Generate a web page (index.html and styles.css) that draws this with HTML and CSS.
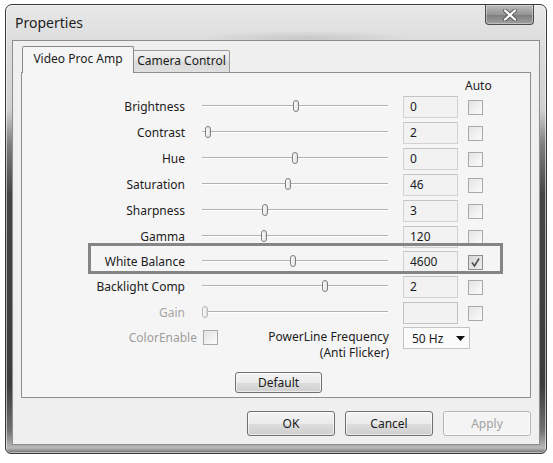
FILE: index.html
```html
<!DOCTYPE html>
<html>
<head>
<meta charset="utf-8">
<title>Properties</title>
<link rel="stylesheet" href="styles.css">
</head>
<body>
<div class="window">
  <div class="titlebar">
    <span class="title">Properties</span>
    <div class="close">
      <svg width="14" height="12" viewBox="0 0 14 12">
        <path d="M2 1.5 L12 10.5 M12 1.5 L2 10.5" stroke="#5a5a5a" stroke-width="4" stroke-linecap="round"/>
        <path d="M2 1.5 L12 10.5 M12 1.5 L2 10.5" stroke="#ffffff" stroke-width="2.2" stroke-linecap="round"/>
      </svg>
    </div>
  </div>
  <div class="client">
    <div class="tabs">
      <div class="tab active">Video Proc Amp</div>
      <div class="tab">Camera Control</div>
    </div>
    <div class="panel">
      <div class="auto-head"><span>Auto</span></div>

      <div class="row">
        <span class="label">Brightness</span>
        <div class="slider"><span class="track"></span><span class="thumb" style="left:91px"></span></div>
        <div class="value">0</div>
        <span class="check"></span>
      </div>
      <div class="row">
        <span class="label">Contrast</span>
        <div class="slider"><span class="track"></span><span class="thumb" style="left:3px"></span></div>
        <div class="value">2</div>
        <span class="check"></span>
      </div>
      <div class="row">
        <span class="label">Hue</span>
        <div class="slider"><span class="track"></span><span class="thumb" style="left:90px"></span></div>
        <div class="value">0</div>
        <span class="check"></span>
      </div>
      <div class="row">
        <span class="label">Saturation</span>
        <div class="slider"><span class="track"></span><span class="thumb" style="left:83px"></span></div>
        <div class="value">46</div>
        <span class="check"></span>
      </div>
      <div class="row">
        <span class="label">Sharpness</span>
        <div class="slider"><span class="track"></span><span class="thumb" style="left:60px"></span></div>
        <div class="value">3</div>
        <span class="check"></span>
      </div>
      <div class="row">
        <span class="label">Gamma</span>
        <div class="slider"><span class="track"></span><span class="thumb" style="left:59px"></span></div>
        <div class="value">120</div>
        <span class="check"></span>
      </div>
      <div class="row wb">
        <span class="label">White Balance</span>
        <div class="slider"><span class="track"></span><span class="thumb" style="left:88px"></span></div>
        <div class="value">4600</div>
        <span class="check checked">
          <svg width="13" height="13" viewBox="0 0 13 13"><path d="M3 6.5 L5.5 10 L10 2.5" fill="none" stroke="#555" stroke-width="1.7"/></svg>
        </span>
        <div class="highlight"></div>
      </div>
      <div class="row">
        <span class="label">Backlight Comp</span>
        <div class="slider"><span class="track"></span><span class="thumb" style="left:120px"></span></div>
        <div class="value">2</div>
        <span class="check"></span>
      </div>
      <div class="row disabled">
        <span class="label">Gain</span>
        <div class="slider"><span class="track"></span><span class="thumb" style="left:0px"></span></div>
        <div class="value"></div>
        <span class="check"></span>
      </div>

      <div class="extra">
        <span class="ce-label">ColorEnable</span>
        <span class="check ce-check"></span>
        <span class="plf">PowerLine Frequency<br>(Anti Flicker)</span>
        <div class="dropdown">
          <span>50 Hz</span>
          <svg width="9" height="5" viewBox="0 0 9 5"><path d="M0 0 H9 L4.5 5 Z" fill="#111"/></svg>
        </div>
      </div>
      <div class="default-wrap"><div class="btn default">Default</div></div>
    </div>
    <div class="actions">
      <div class="btn">OK</div>
      <div class="btn">Cancel</div>
      <div class="btn disabled-btn">Apply</div>
    </div>
  </div>
</div>
</body>
</html>
```
FILE: styles.css
```css
* { box-sizing: border-box; }

body {
  margin: 0;
  background: #ffffff;
  font-family: "Noto Sans", "Open Sans", sans-serif;
  font-size: 12px;
  color: #1c1c1c;
}

.window {
  width: 542px;
  height: 450px;
  margin: 4px 0 0 5px;
  border: 1px solid #3a3a3a;
  border-radius: 7px 7px 6px 6px;
  padding: 0 6px 8px;
  display: flex;
  flex-direction: column;
  background:
    radial-gradient(ellipse 110px 7px at 300px 33px, rgba(0,0,0,0.10), rgba(0,0,0,0)),
    linear-gradient(to bottom, #e8e8e8 0, #dcdcdc 40px, #d0d0d0 105px, #7e7e7e 140px, #454545 190px, #3c3c3c 380px, #707070 425px, #b8b8b8 443px, #6a6a6a 100%);
  box-shadow: inset 0 0 0 1px rgba(255,255,255,0.55);
}

.titlebar {
  flex: none;
  height: 35px;
  display: flex;
  align-items: flex-start;
}

.title {
  padding: 8px 0 0 3px;
  font-size: 14px;
  line-height: 19px;
  color: #222;
}

.close {
  margin-left: auto;
  margin-right: 6px;
  width: 49px;
  height: 20px;
  border: 1px solid #4d4d4d;
  border-top: none;
  border-radius: 0 0 4px 4px;
  background: linear-gradient(to bottom, #bcbcbc, #959595 50%, #7c7c7c 51%, #a0a0a0);
  box-shadow: inset 0 0 0 1px rgba(255,255,255,0.35);
  display: flex;
  align-items: center;
  justify-content: center;
}

.client {
  flex: none;
  height: 405px;
  border: 1px solid #8d8d8d;
  background: #efefef;
  padding: 5px 8px 8px 8px;
  display: flex;
  flex-direction: column;
}

.tabs {
  flex: none;
  height: 26px;
  display: flex;
  align-items: flex-end;
  padding-left: 1px;
}

.tab {
  height: 22px;
  width: 97px;
  margin-left: -1px;
  border: 1px solid #9a9a9a;
  border-bottom: none;
  border-radius: 2px 2px 0 0;
  line-height: 20px;
  text-align: center;
  white-space: nowrap;
  background: linear-gradient(to bottom, #f2f2f2, #e4e4e4 50%, #d9d9d9 51%, #e0e0e0);
}

.tab.active {
  width: 112px;
  height: 27px;
  margin-left: 0;
  margin-bottom: -1px;
  padding-top: 2px;
  border-color: #888;
  background: #f5f5f5;
  position: relative;
  z-index: 1;
}

.panel {
  flex: none;
  height: 326px;
  border: 1px solid #8f8f8f;
  background: #f5f5f5;
}

.auto-head {
  height: 21px;
  padding-left: 443px;
  display: flex;
  align-items: flex-end;
  line-height: 16px;
}

.row {
  display: flex;
  align-items: center;
  height: 26px;
  position: relative;
}

.row.wb { height: 24px; }

.label {
  width: 163px;
  text-align: right;
  line-height: 16px;
  white-space: nowrap;
}

.slider {
  width: 186px;
  height: 22px;
  margin-left: 17px;
  position: relative;
  display: flex;
  flex-direction: column;
  padding-top: 9px;
}

.track {
  height: 2px;
  border-top: 1px solid #b2b2b2;
  border-bottom: 1px solid #ffffff;
}

.thumb {
  position: absolute;
  top: 4px;
  width: 6px;
  height: 12px;
  border: 1px solid #7e7e7e;
  border-radius: 3px;
  background: linear-gradient(to right, #fafafa, #e2e2e2);
}

.value {
  width: 55px;
  height: 22px;
  margin-left: 15px;
  border: 1px solid #d2d2d2;
  border-top-color: #c4c4c4;
  background: #f2f2f2;
  padding-left: 6px;
  line-height: 20px;
}

.check {
  width: 15px;
  height: 15px;
  margin-left: 10px;
  border: 1px solid #a9a9a9;
  background: linear-gradient(135deg, #e4e4e4, #fbfbfb);
  display: flex;
  align-items: center;
  justify-content: center;
}

.check.checked {
  background: linear-gradient(135deg, #d6d6d6, #eeeeee);
  border-color: #8e8e8e;
}

.row.disabled .label { color: #a6a6a6; }
.row.disabled .thumb { border-color: #b4b4b4; }
.row.disabled .value { border-color: #c2c2c2; }

.highlight {
  position: absolute;
  left: 66px;
  top: -7px;
  width: 415px;
  height: 31px;
  border: 3px solid #858585;
}

.extra {
  display: flex;
  align-items: flex-start;
  height: 34px;
  margin-top: 1px;
}

.ce-label {
  width: 175px;
  margin-top: 3px;
  text-align: right;
  line-height: 16px;
  color: #9d9d9d;
}

.check.ce-check {
  margin-left: 6px;
  margin-top: 3px;
}

.plf {
  width: 171px;
  margin-top: 2px;
  text-align: right;
  line-height: 16px;
}

.dropdown {
  width: 67px;
  height: 22px;
  margin-left: 14px;
  border: 1px solid #c4c4c4;
  background: #fbfbfb;
  display: flex;
  align-items: center;
  justify-content: space-between;
  padding: 0 4px 0 8px;
}

.default-wrap {
  display: flex;
  justify-content: center;
  padding-left: 5px;
  margin-top: 11px;
}

.btn {
  width: 88px;
  height: 25px;
  border: 1px solid #707070;
  border-radius: 3px;
  background: linear-gradient(to bottom, #f3f3f3, #ebebeb 50%, #dddddd 51%, #cfcfcf);
  box-shadow: inset 0 0 0 1px rgba(255,255,255,0.6);
  display: flex;
  align-items: center;
  justify-content: center;
  color: #1a1a1a;
}

.btn.default {
  width: 87px;
  height: 21px;
}

.actions {
  flex: none;
  display: flex;
  justify-content: flex-end;
  gap: 10px;
  margin-top: 13px;
}

.btn.disabled-btn {
  border-color: #b5b5b5;
  background: #f4f4f4;
  color: #a2a2a2;
}
```
